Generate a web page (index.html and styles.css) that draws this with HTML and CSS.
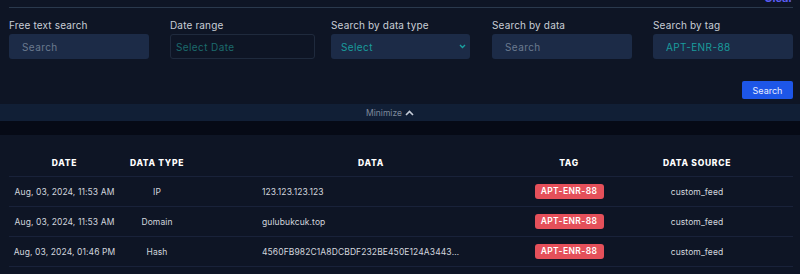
FILE: index.html
```html
<!DOCTYPE html>
<html lang="en">
<head>
    <meta charset="UTF-8">
    <title>Indicators</title>
    <link rel="stylesheet" href="styles.css">
</head>
<body>
    <div class="filters">
        <div class="filters-head">
            <span class="filters-title">Select Filters</span>
            <a class="clear-link" href="#">Clear</a>
        </div>

        <div class="fields">
            <div class="field">
                <label>Free text search</label>
                <div class="input placeholder">Search</div>
            </div>
            <div class="field">
                <label>Date range</label>
                <div class="input outline teal-dim">Select Date</div>
            </div>
            <div class="field">
                <label>Search by data type</label>
                <div class="input select teal">
                    Select
                    <svg class="chevron" width="7" height="5" viewBox="0 0 7 5"><path d="M1 1l2.5 2.5L6 1" fill="none" stroke="#1aa0a0" stroke-width="1.4"/></svg>
                </div>
            </div>
            <div class="field">
                <label>Search by data</label>
                <div class="input placeholder">Search</div>
            </div>
            <div class="field">
                <label>Search by tag</label>
                <div class="input teal">APT-ENR-88</div>
            </div>
        </div>

        <div class="actions">
            <button class="btn-search">Search</button>
        </div>
    </div>

    <div class="minimize">
        Minimize
        <svg width="9" height="6" viewBox="0 0 9 6"><path d="M1 5l3.5-3.5L8 5" fill="none" stroke="#c5ccd8" stroke-width="1.6"/></svg>
    </div>
    <div class="gap-band"></div>

    <div class="results">
        <div class="row head">
            <div class="cell">Date</div>
            <div class="cell">Data Type</div>
            <div class="cell data">Data</div>
            <div class="cell">Tag</div>
            <div class="cell">Data Source</div>
        </div>
        <div class="row">
            <div class="cell">Aug, 03, 2024, 11:53 AM</div>
            <div class="cell">IP</div>
            <div class="cell data"><span>123.123.123.123</span></div>
            <div class="cell"><span class="tag">APT-ENR-88</span></div>
            <div class="cell">custom_feed</div>
        </div>
        <div class="row">
            <div class="cell">Aug, 03, 2024, 11:53 AM</div>
            <div class="cell">Domain</div>
            <div class="cell data"><span>gulubukcuk.top</span></div>
            <div class="cell"><span class="tag">APT-ENR-88</span></div>
            <div class="cell">custom_feed</div>
        </div>
        <div class="row">
            <div class="cell">Aug, 03, 2024, 01:46 PM</div>
            <div class="cell">Hash</div>
            <div class="cell data"><span>4560FB982C1A8DCBDF232BE450E124A34439DE1F05C1</span></div>
            <div class="cell"><span class="tag">APT-ENR-88</span></div>
            <div class="cell">custom_feed</div>
        </div>
    </div>
</body>
</html>
```

FILE: styles.css
```css
* {
    margin: 0;
    padding: 0;
    box-sizing: border-box;
}

body {
    font-family: Inter, 'Open Sans', sans-serif;
    background: #0e1525;
    color: #d4d8e0;
    width: 800px;
    height: 274px;
    overflow: hidden;
}

.filters {
    padding: 0 7px 0 9px;
}

.filters-head {
    display: flex;
    justify-content: space-between;
    align-items: flex-end;
    height: 9px;
    margin-top: -1px;
    border-bottom: 1px solid #2a394d;
}

.filters-title {
    font-size: 9px;
    color: #8791a1;
    line-height: 9px;
    transform: translateY(-6px);
}

.clear-link {
    font-size: 11px;
    font-weight: 700;
    color: #5a5cf2;
    text-decoration: none;
    line-height: 11px;
    transform: translateY(-3px);
}

.fields {
    display: grid;
    grid-template-columns: repeat(5, 140px);
    column-gap: 21px;
    margin-top: 10px;
}

.field label {
    display: block;
    font-size: 10px;
    color: #c9ced6;
    letter-spacing: 0.15px;
    line-height: 14px;
    margin-bottom: 2px;
}

.input {
    height: 25px;
    border-radius: 3px;
    background: #1c2b47;
    font-size: 10px;
    letter-spacing: 0.4px;
    display: flex;
    align-items: center;
    padding-left: 13px;
}

.input.outline {
    background: transparent;
    border: 1px solid #1f2a3d;
    width: 145px;
    padding-left: 5px;
}

.input.select {
    width: 139px;
    padding-left: 10px;
    justify-content: space-between;
    padding-right: 4px;
}

.placeholder {
    color: #6b7a8f;
}

.teal {
    color: #1a9c9c;
}

.teal-dim {
    color: #1c6a6c;
}

.actions {
    display: flex;
    justify-content: flex-end;
    margin-top: 22px;
}

.btn-search {
    width: 51px;
    height: 18px;
    background: #1d56e8;
    color: #e8edff;
    border: none;
    border-radius: 2px;
    font-family: inherit;
    font-size: 9px;
}

.minimize {
    margin-top: 5px;
    height: 17px;
    background: #111f36;
    color: #7f8a9c;
    font-size: 8.5px;
    display: flex;
    align-items: center;
    justify-content: center;
    gap: 3px;
    padding-right: 20px;
}

.gap-band {
    height: 14px;
    background: #060a16;
}

.results {
    padding: 14px 7px 0 9px;
}

.row {
    display: grid;
    grid-template-columns: 111px 74px 306px 138px 118px;
    height: 30px;
    align-items: center;
    border-bottom: 1px solid #19223a;
    font-size: 8.5px;
    color: #d2d6de;
    letter-spacing: 0.1px;
}

.row.head {
    height: 28px;
    font-size: 8.5px;
    font-weight: 800;
    color: #ffffff;
    text-transform: uppercase;
    letter-spacing: 0.7px;
}

.cell {
    text-align: center;
    white-space: nowrap;
}

.cell.data {
    text-align: left;
    padding-left: 68px;
}

.row.head .cell.data {
    text-align: center;
    padding-left: 48px;
}

.cell.data span {
    display: block;
    width: 202px;
    overflow: hidden;
    text-overflow: ellipsis;
}

.tag {
    display: inline-block;
    width: 69px;
    height: 15px;
    line-height: 15px;
    background: #e5505a;
    color: #ffffff;
    border-radius: 3px;
    font-size: 8.5px;
    font-weight: 600;
    letter-spacing: 0.4px;
}
```
